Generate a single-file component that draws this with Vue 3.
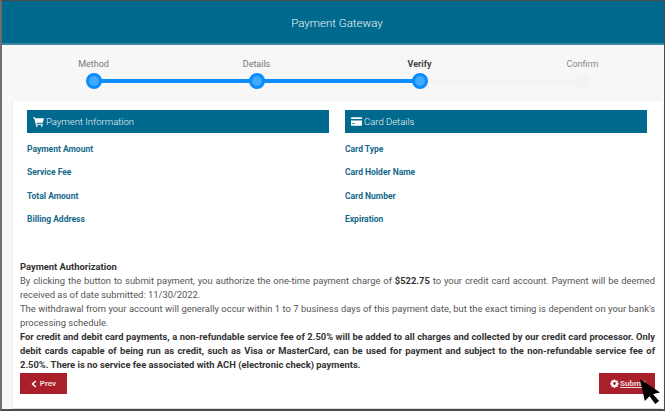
<template>
  <div class="frame">
    <header class="top-bar">Payment Gateway</header>

    <div class="steps">
      <div v-for="(step, i) in steps" :key="step.name" class="step" :class="step.state">
        <span class="step-name">{{ step.name }}</span>
        <span class="step-track">
          <span v-if="i > 0" class="line line-left" />
          <span v-if="i < steps.length - 1" class="line line-right" />
          <span class="dot" />
        </span>
      </div>
    </div>

    <main class="panel">
      <div class="columns">
        <section class="col">
          <h2 class="col-title">
            <svg class="ico" viewBox="0 0 16 14" width="11" height="10">
              <path fill="#fff" d="M0 0h2.600l.6 1.600H16l-1.600 6.600H5l.4 1.400h9v1.400H4.200L1.600 1.400H0z" />
              <circle fill="#fff" cx="5.600" cy="12.600" r="1.400" />
              <circle fill="#fff" cx="12.800" cy="12.600" r="1.400" />
            </svg>
            Payment Information
          </h2>
          <p v-for="label in paymentRows" :key="label" class="row">{{ label }}</p>
        </section>
        <section class="col">
          <h2 class="col-title">
            <svg class="ico" viewBox="0 0 14 11" width="11" height="9">
              <path fill="#fff" d="M1 0h12a1 1 0 0 1 1 1v1.200H0V1a1 1 0 0 1 1-1zM0 4.200h14V10a1 1 0 0 1-1 1H1a1 1 0 0 1-1-1zM1.500 7.600v1h3.400v-1z" />
            </svg>
            Card Details
          </h2>
          <p v-for="label in cardRows" :key="label" class="row">{{ label }}</p>
        </section>
      </div>

      <div class="terms">
        <strong>Payment Authorization</strong><br />
        By clicking the button to submit payment, you authorize the one-time payment charge of <strong>$522.75</strong> to your credit card account. Payment will be deemed received as of date submitted: 11/30/2022.<br />
        The withdrawal from your account will generally occur within 1 to 7 business days of this payment date, but the exact timing is dependent on your bank's processing schedule.<br />
        <strong>For credit and debit card payments, a non-refundable service fee of 2.50% will be added to all charges and collected by our credit card processor. Only debit cards capable of being run as credit, such as Visa or MasterCard, can be used for payment and subject to the non-refundable service fee of 2.50%. There is no service fee associated with ACH (electronic check) payments.</strong>
      </div>

      <div class="actions">
        <button class="btn" type="button">
          <svg viewBox="0 0 8 10" width="6" height="8"><path d="M6.500 1 2 5l4.500 4" fill="none" stroke="#fff" stroke-width="2" /></svg>
          Prev
        </button>
        <button class="btn btn-submit" type="button">
          <svg viewBox="-1 -1 18 18" width="9" height="9">
            <path fill="#fff" fill-rule="evenodd" d="M6.600 0h2.800l.4 2.200 1.300.6 1.900-1.300 2 2-1.300 1.900.6 1.300 2.200.4v2.800l-2.200.4-.6 1.300 1.300 1.900-2 2-1.900-1.300-1.300.6-.4 2.200H6.600l-.4-2.200-1.300-.6-1.900 1.300-2-2 1.300-1.900-.6-1.300-2.200-.4V6.600l2.200-.4.6-1.300L1 3l2-2 1.900 1.300 1.300-.6zM8 5.200a2.800 2.800 0 1 0 0 5.600 2.800 2.800 0 0 0 0-5.600z" />
          </svg>
          <span class="link">Submit</span>
        </button>
        <svg class="cursor" viewBox="0 0 24 28" width="23" height="27">
          <path fill="#000" d="M1 1 22 15l-7.500 1.500L21 24l-4 3-6-8-5 5z" />
        </svg>
      </div>
    </main>
  </div>
</template>

<script setup>
const steps = [
  { name: 'Method', state: 'done' },
  { name: 'Details', state: 'done' },
  { name: 'Verify', state: 'current' },
  { name: 'Confirm', state: 'todo' },
]

const paymentRows = ['Payment Amount', 'Service Fee', 'Total Amount', 'Billing Address']
const cardRows = ['Card Type', 'Card Holder Name', 'Card Number', 'Expiration']
</script>

<style>
html, body { margin: 0; background: #fff; }
</style>

<style scoped>
.frame {
  box-sizing: border-box;
  width: 665px;
  height: 411px;
  border: 1px solid #4a4a4a;
  border-left: 2px solid #6e6e6e;
  border-bottom-width: 2px;
  background: #f8f8f8;
  font-family: Roboto, "Liberation Sans", sans-serif;
  overflow: hidden;
}

.top-bar {
  height: 42px;
  padding-left: 8px;
  border-bottom: 2px solid #3a8aa6;
  background: #006a8e;
  color: #eef4f7;
  font-size: 11.500px;
  font-weight: 300;
  line-height: 44px;
  text-align: center;
}

.steps {
  box-sizing: border-box;
  display: grid;
  grid-template-columns: repeat(4, 163px);
  margin: 2px 0 0 10px;
  padding-top: 10px;
  height: 54px;
  width: 650px;
  background: #f7f7f7;
}
.step {
  display: flex;
  flex-direction: column;
  align-items: center;
  gap: 2px;
}
.step-name {
  font-size: 9px;
  line-height: 14px;
  color: #777;
}
.step-track {
  position: relative;
  width: 100%;
  height: 16px;
  display: flex;
  justify-content: center;
  align-items: center;
}
.dot {
  position: relative;
  box-sizing: border-box;
  width: 16px;
  height: 16px;
  border-radius: 50%;
  background: #3fa9ff;
  border: 3px solid #0a8cff;
}
.line {
  position: absolute;
  top: 6px;
  width: 50%;
  height: 4px;
  background: #0a8cff;
}
.line-left { left: 0; }
.line-right { right: 0; }

.current .step-name { color: #444; font-weight: 700; }
.current .line-right { background: #f3f3f3; }
.todo .step-name { color: #8a8a8a; }
.todo .line-left { background: #f3f3f3; }
.todo .dot { background: #f3f3f3; border-color: #f3f3f3; }

.panel {
  box-sizing: border-box;
  margin-left: 10px;
  width: 650px;
  height: 308px;
  padding: 9px 15px 0 14px;
  background: #fff;
  border-left: 1px solid #eee;
  border-bottom: 1px solid #ddd;
}

.columns {
  display: grid;
  grid-template-columns: 302px 302px;
  column-gap: 16px;
}
.col-title {
  display: flex;
  align-items: center;
  gap: 2px;
  margin: 0 0 5px;
  height: 23px;
  padding-left: 6px;
  background: #006a8e;
  color: #eef4f7;
  font-size: 9.500px;
  font-weight: 300;
}
.row {
  margin: 0;
  height: 23.300px;
  line-height: 23.300px;
  font-size: 8.500px;
  font-weight: 700;
  color: #14698a;
}

.terms {
  margin: 29px -8px 0 -7px;
  font-size: 9.400px;
  line-height: 14px;
  color: #555;
  text-align: justify;
}
.terms strong { color: #333; font-weight: 700; }

.actions {
  position: relative;
  display: flex;
  justify-content: space-between;
  margin: 1px -8px 0 -7px;
}
.btn {
  display: inline-flex;
  align-items: center;
  justify-content: center;
  gap: 3px;
  width: 47px;
  height: 21px;
  border: none;
  padding: 0;
  background: #a91f2a;
  color: #eed9da;
  font-family: inherit;
  font-size: 8px;
  font-weight: 700;
}
.btn-submit {
  justify-content: flex-start;
  gap: 1px;
  width: 56px;
  padding-left: 11px;
}
.link { text-decoration: underline; }
.cursor {
  position: absolute;
  right: -7px;
  top: 5px;
}
</style>
